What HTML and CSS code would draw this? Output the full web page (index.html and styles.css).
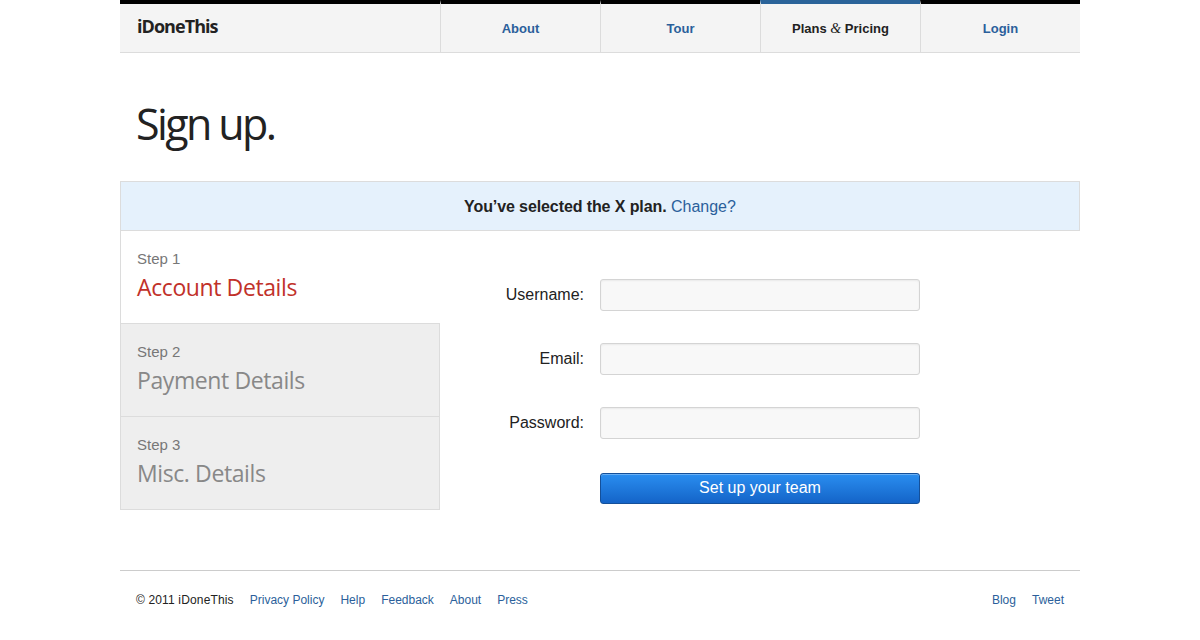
FILE: index.html
```html
<!DOCTYPE html>
<html>
<head>
<meta charset="utf-8">
<title>iDoneThis - Sign up</title>
<link rel="stylesheet" href="styles.css">
</head>
<body>
<div class="page">
  <header class="topbar">
    <div class="logo">iDoneThis</div>
    <nav class="nav">
      <a class="nav-item" href="#">About</a>
      <a class="nav-item" href="#">Tour</a>
      <a class="nav-item active" href="#">Plans <span class="amp">&amp;</span> Pricing</a>
      <a class="nav-item" href="#">Login</a>
    </nav>
  </header>

  <h1 class="title">Sign up.</h1>

  <div class="banner"><strong>You’ve selected the X plan.</strong> <a href="#">Change?</a></div>

  <div class="signup">
    <ul class="steps">
      <li class="step current"><span class="step-num">Step 1</span><span class="step-name">Account Details</span></li>
      <li class="step"><span class="step-num">Step 2</span><span class="step-name">Payment Details</span></li>
      <li class="step"><span class="step-num">Step 3</span><span class="step-name">Misc. Details</span></li>
    </ul>
    <form class="form">
      <div class="row"><label>Username:</label><input type="text"></div>
      <div class="row"><label>Email:</label><input type="text"></div>
      <div class="row"><label>Password:</label><input type="password"></div>
      <div class="row actions"><span class="spacer"></span><button type="button" class="btn">Set up your team</button></div>
    </form>
  </div>

  <footer class="footer">
    <div class="footer-left">
      <span class="copy">© 2011 iDoneThis</span>
      <a href="#">Privacy Policy</a>
      <a href="#">Help</a>
      <a href="#">Feedback</a>
      <a href="#">About</a>
      <a href="#">Press</a>
    </div>
    <div class="footer-right">
      <a href="#">Blog</a>
      <a href="#">Tweet</a>
    </div>
  </footer>
</div>
</body>
</html>
```

FILE: styles.css
```css
* { box-sizing: border-box; }
html, body { margin: 0; padding: 0; background: #fff; }
body { font-family: "Liberation Sans", Arial, sans-serif; color: #222; }
a { color: #2b5f9b; text-decoration: none; }

.page { width: 960px; margin: 0 auto; }

.topbar {
  display: flex;
  height: 53px;
  background: #f4f4f4;
  border-top: 4px solid #000;
  border-bottom: 1px solid #dcdcdc;
}
.logo {
  flex: 1;
  padding-left: 17px;
  font-family: "Open Sans", sans-serif;
  font-weight: 700;
  font-size: 18px;
  letter-spacing: -0.95px;
  line-height: 44px;
  color: #222;
}
.nav { display: flex; }
.nav-item {
  width: 160px;
  margin-top: -4px;
  border-top: 4px solid transparent;
  border-left: 1px solid #dcdcdc;
  text-align: center;
  font-weight: 700;
  font-size: 13px;
  line-height: 50px;
  color: #2b5f9b;
}
.nav-item.active { border-top-color: #2a6399; color: #222; }
.amp { font-family: "Liberation Serif", serif; font-style: italic; font-weight: 400; font-size: 14px; }

.title {
  margin: 0;
  padding: 41px 0 0 16px;
  height: 128px;
  font-family: "Open Sans", sans-serif;
  font-weight: 400;
  font-size: 43px;
  letter-spacing: -2.6px;
  line-height: 60px;
  color: #222;
}

.banner {
  height: 50px;
  background: #e5f1fc;
  border: 1px solid #dcdcdc;
  text-align: center;
  font-size: 16px;
  line-height: 49px;
  color: #222;
}
.banner strong { letter-spacing: -0.1px; }

.signup { display: flex; }
.steps { list-style: none; margin: 0; padding: 0; width: 320px; }
.step {
  height: 93px;
  padding: 19px 0 0 16px;
  background: #eee;
  border: 1px solid #dcdcdc;
  border-top: 0;
  display: flex;
  flex-direction: column;
}
.step.current { background: #fff; border-right: 0; }
.step-num { font-size: 15px; color: #777; line-height: 18px; }
.step-name {
  font-family: "Open Sans", sans-serif;
  font-size: 23px;
  letter-spacing: -0.4px;
  line-height: 30px;
  margin-top: 4px;
  color: #888;
}
.current .step-name { color: #c1312a; }

.form { padding-top: 48px; }
.row { display: flex; align-items: center; height: 32px; margin-bottom: 32px; }
.row label, .spacer {
  width: 160px;
  padding-right: 16px;
  text-align: right;
  font-size: 16px;
  color: #222;
}
.row input {
  width: 320px;
  height: 32px;
  border: 1px solid #d4d4d4;
  border-radius: 3px;
  background: #f8f8f8;
  box-shadow: inset 0 1px 2px rgba(0,0,0,0.06);
}
.row.actions { margin-top: 33px; }
.btn {
  width: 320px;
  height: 31px;
  border: 1px solid #14509a;
  border-radius: 3px;
  background: linear-gradient(#2a8ef0, #1464c8);
  color: #fff;
  font-family: "Liberation Sans", Arial, sans-serif;
  font-size: 16px;
  box-shadow: inset 0 1px 0 rgba(255,255,255,0.3);
}

.footer {
  margin-top: 34px;
  border-top: 1px solid #ccc;
  display: flex;
  justify-content: space-between;
  padding: 22px 16px 0 16px;
  font-size: 12px;
}
.footer-left, .footer-right { display: flex; gap: 16px; }
.copy { color: #222; letter-spacing: 0.15px; }
```
